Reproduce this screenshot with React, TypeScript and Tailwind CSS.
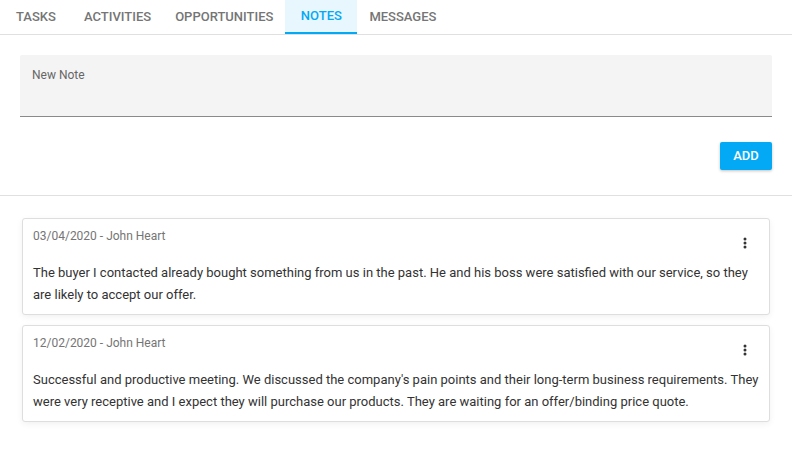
import React from "react";

const tabs = ["Tasks", "Activities", "Opportunities", "Notes", "Messages"];

const notes = [
  {
    head: "03/04/2020 - John Heart",
    text: "The buyer I contacted already bought something from us in the past. He and his boss were satisfied with our service, so they are likely to accept our offer.",
  },
  {
    head: "12/02/2020 - John Heart",
    text: "Successful and productive meeting. We discussed the company's pain points and their long-term business requirements. They were very receptive and I expect they will purchase our products. They are waiting for an offer/binding price quote.",
  },
];

function Dots() {
  return (
    <svg width="24" height="24" viewBox="0 0 24 24">
      <circle cx="12" cy="8" r="1.5" fill="#333" />
      <circle cx="12" cy="12" r="1.5" fill="#333" />
      <circle cx="12" cy="16" r="1.5" fill="#333" />
    </svg>
  );
}

export default function App() {
  return (
    <div
      className="w-[792px] h-[452px] bg-white text-[#333] overflow-hidden"
      style={{ fontFamily: "Roboto, 'Liberation Sans', sans-serif" }}
    >
      <div className="flex h-[35px] border-b border-[#e0e0e0]">
        {tabs.map((t) => {
          const active = t === "Notes";
          return (
            <div
              key={t}
              className={
                active
                  ? "min-w-[72px] px-[12px] h-[34px] flex items-center justify-center uppercase text-[13px] font-medium text-[#03a9f4] bg-[#e8f6fe] border-b-2 border-[#03a9f4]"
                  : "min-w-[72px] px-[12px] h-[34px] flex items-center justify-center uppercase text-[13px] font-medium text-[#757575]"
              }
            >
              {t}
            </div>
          );
        })}
      </div>
      <div className="px-[20px] pt-[20px] pb-[25px] border-b border-[#e0e0e0]">
        <div className="h-[62px] bg-[#f4f4f4] rounded-t-[2px] border-b border-[#8a8a8a] px-[12px] pt-[13px]">
          <div className="text-[12px] leading-[14px] text-[#666]">New Note</div>
        </div>
        <div className="flex justify-end mt-[25px]">
          <button className="w-[52px] h-[28px] bg-[#03a9f4] text-white text-[13px] font-medium uppercase rounded-[2px] shadow-[0_1px_3px_rgba(0,0,0,0.25)] flex items-center justify-center">
            Add
          </button>
        </div>
      </div>
      <div className="px-[22px] pt-[22px] flex flex-col gap-[10px]">
        {notes.map((n) => (
          <div
            key={n.head}
            className="border border-[#dedede] rounded-[3px] bg-white shadow-[0_2px_6px_rgba(0,0,0,0.06)] pl-[10px] pr-[4px] pt-[9px] pb-[8px]"
          >
            <div className="flex justify-between h-[34px] pr-[8px]">
              <div className="text-[12px] leading-[17px] text-[#757575]">{n.head}</div>
              <div className="mt-[3px] w-6 h-6">
                <Dots />
              </div>
            </div>
            <div className="text-[13px] leading-[22px] text-[#333]">{n.text}</div>
          </div>
        ))}
      </div>
    </div>
  );
}
